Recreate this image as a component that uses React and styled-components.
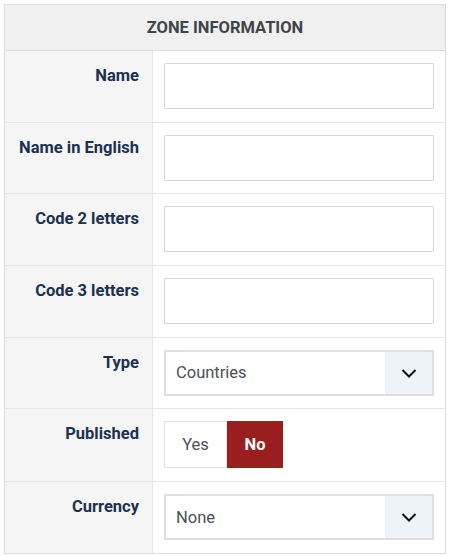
import React from "react"
import styled, { createGlobalStyle } from "styled-components"

const GlobalStyle = createGlobalStyle`
  body {
    margin: 0;
    background: #fff;
    font-family: Roboto, "Liberation Sans", sans-serif;
  }
`

const Page = styled.div`
  padding: 4px;
`

const Table = styled.table`
  width: 442px;
  border-collapse: collapse;
  border: 1px solid #dcdcdc;
  table-layout: fixed;
`

const LabelCol = styled.col`
  width: 148px;
`

const HeadCell = styled.th`
  height: 45px;
  padding: 0;
  background: #f0f0f0;
  color: #404448;
  font-size: 16.5px;
  font-weight: 700;
  text-align: center;
  border-bottom: 1px solid #dcdcdc;
`

const Row = styled.tr`
  border-bottom: 1px solid #e3e6ea;
  &:last-child {
    border-bottom: none;
  }
`

const Label = styled.th`
  box-sizing: border-box;
  padding: 15px 13px 0 6px;
  background: #f5f5f5;
  border-right: 1px solid #e3e6ea;
  text-align: right;
  vertical-align: top;
  color: #1c3050;
  font-size: 16.5px;
  font-weight: 700;
  line-height: 20px;
`

const Field = styled.td`
  padding: 12px 11px 12.7px 11px;
  vertical-align: top;
`

const TextInput = styled.input`
  display: block;
  width: 270px;
  height: 46px;
  box-sizing: border-box;
  border: 1px solid #d3d8de;
  border-radius: 1px;
  padding: 0 10px;
  font: 16px Roboto, "Liberation Sans", sans-serif;
  outline: none;
`

const Select = styled.div`
  display: flex;
  width: 270px;
  height: 46px;
  box-sizing: border-box;
  border: 2px solid #dcdfe3;
  background: #fff;
`

const SelectValue = styled.span`
  flex: 1;
  display: flex;
  align-items: center;
  padding-left: 10px;
  color: #495057;
  font-size: 16.5px;
`

const Caret = styled.span`
  width: 47px;
  display: flex;
  align-items: center;
  justify-content: center;
  background: #eef3fa;
  color: #111;
`

const Toggle = styled.div`
  display: flex;
  height: 47px;
  width: fit-content;
`

const ToggleButton = styled.span`
  display: flex;
  align-items: center;
  justify-content: center;
  width: ${(p) => p.$w}px;
  box-sizing: border-box;
  font-size: 16.5px;
  color: ${(p) => (p.$active ? "#fff" : "#495057")};
  background: ${(p) => (p.$active ? "#9b1e1e" : "#fff")};
  border: 1px solid ${(p) => (p.$active ? "#9b1e1e" : "#dfe2e6")};
  font-weight: ${(p) => (p.$active ? 700 : 400)};
`

const Chevron = () => (
  <svg width="16" height="16" viewBox="0 0 16 16" fill="none">
    <path d="M1.5 5 L8 11.5 L14.5 5" stroke="currentColor" strokeWidth="2" />
  </svg>
)

const SelectBox = ({ value }) => (
  <Select>
    <SelectValue>{value}</SelectValue>
    <Caret>
      <Chevron />
    </Caret>
  </Select>
)

export default function App() {
  return (
    <Page>
      <GlobalStyle />
      <Table>
        <colgroup>
          <LabelCol />
          <col />
        </colgroup>
        <thead>
          <tr>
            <HeadCell colSpan={2}>ZONE INFORMATION</HeadCell>
          </tr>
        </thead>
        <tbody>
          {["Name", "Name in English", "Code 2 letters", "Code 3 letters"].map((l) => (
            <Row key={l}>
              <Label>{l}</Label>
              <Field>
                <TextInput />
              </Field>
            </Row>
          ))}
          <Row>
            <Label>Type</Label>
            <Field>
              <SelectBox value="Countries" />
            </Field>
          </Row>
          <Row>
            <Label>Published</Label>
            <Field>
              <Toggle>
                <ToggleButton $w={63}>Yes</ToggleButton>
                <ToggleButton $w={56} $active>
                  No
                </ToggleButton>
              </Toggle>
            </Field>
          </Row>
          <Row>
            <Label>Currency</Label>
            <Field>
              <SelectBox value="None" />
            </Field>
          </Row>
        </tbody>
      </Table>
    </Page>
  )
}
